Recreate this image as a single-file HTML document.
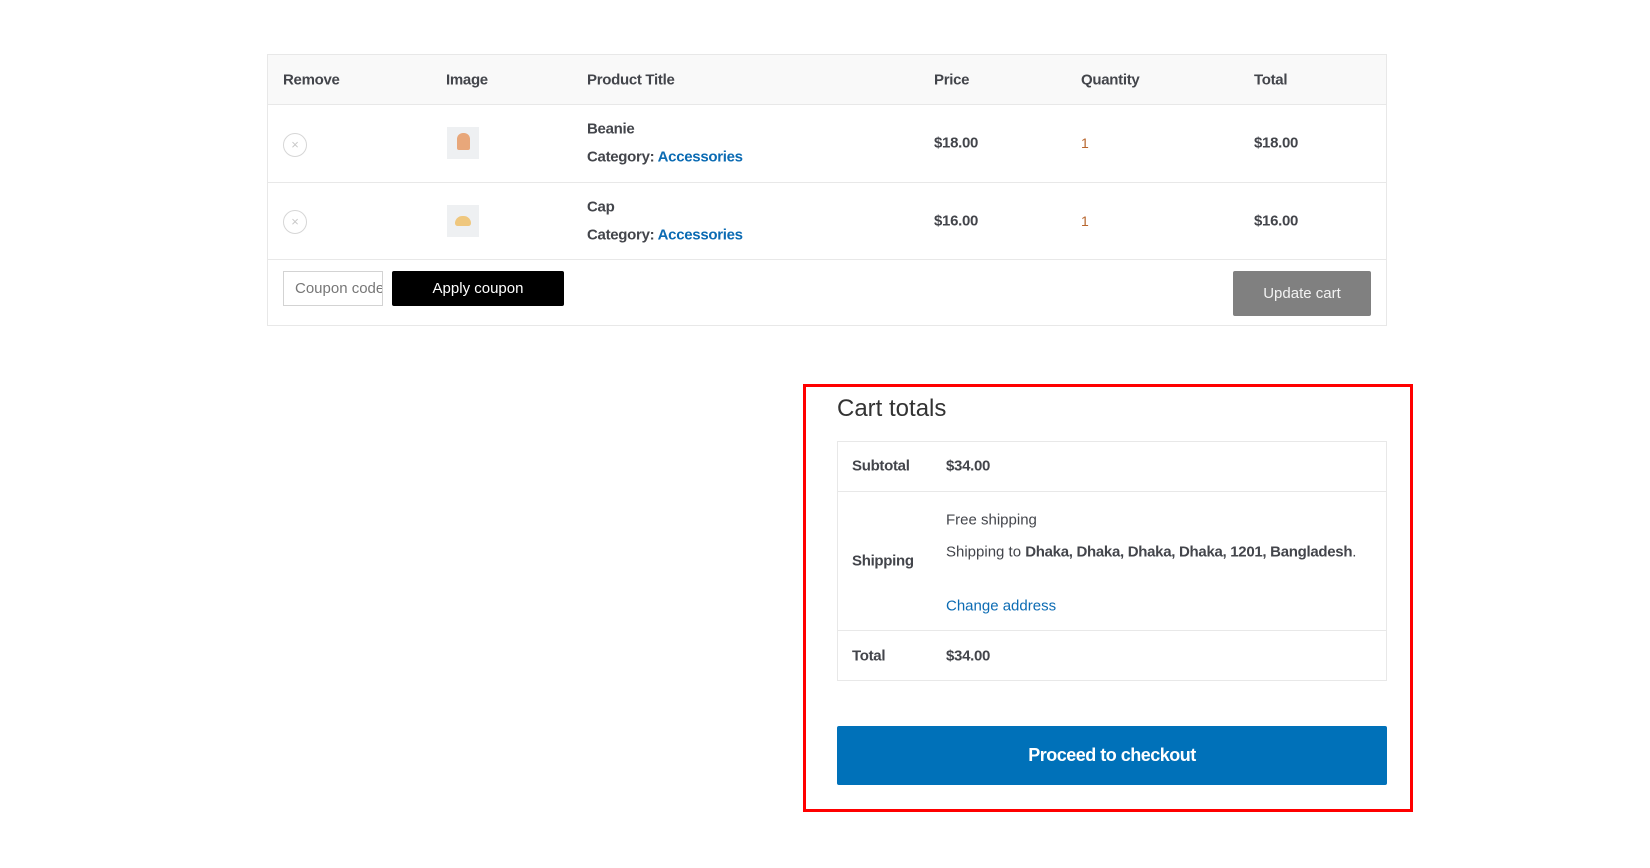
<!DOCTYPE html>
<html><head><meta charset="utf-8"><style>
*{box-sizing:border-box;margin:0;padding:0}
body{width:1650px;height:868px;background:#fff;font-family:"Liberation Sans",sans-serif;color:#43454b;position:relative;overflow:hidden;font-size:15px}
.abs{position:absolute}
.b{font-weight:bold;letter-spacing:-0.3px}
.link{color:#0b6bb3}
.line{position:absolute;background:#e8e8e8;height:1px}
.circ{position:absolute;width:24px;height:24px;border:1px solid #d6d6d6;border-radius:50%;color:#c8c8c8;font-size:13px;text-align:center;line-height:22px}
.thumb{position:absolute;width:32px;height:32px;background:#eef0f2}
.v{transform:translateY(-50%)}
</style></head><body>
<div class="abs" style="left:267px;top:54px;width:1120px;height:272px;border:1px solid #e8e8e8"></div>
<div class="abs" style="left:268px;top:55px;width:1118px;height:49px;background:#f9f9f9"></div>
<div class="line" style="left:267px;top:104px;width:1120px"></div>
<div class="line" style="left:267px;top:182px;width:1120px"></div>
<div class="line" style="left:267px;top:259px;width:1120px"></div>
<div class="abs b v" style="left:283px;top:80px">Remove</div>
<div class="abs b v" style="left:446px;top:80px">Image</div>
<div class="abs b v" style="left:587px;top:80px">Product Title</div>
<div class="abs b v" style="left:934px;top:80px">Price</div>
<div class="abs b v" style="left:1081px;top:80px">Quantity</div>
<div class="abs b v" style="left:1254px;top:80px">Total</div>

<div class="circ" style="left:283px;top:133px">×</div>
<div class="thumb" style="left:447px;top:127px"><div style="position:absolute;left:10px;top:6px;width:13px;height:17px;background:#e8a77a;border-radius:6px 6px 2px 2px"></div></div>
<div class="abs b v" style="left:587px;top:129px">Beanie</div>
<div class="abs b v" style="left:587px;top:157px">Category: <span class="link">Accessories</span></div>
<div class="abs b v" style="left:934px;top:143px">$18.00</div>
<div class="abs v" style="left:1081px;top:143px;color:#b8662e;font-size:14px">1</div>
<div class="abs b v" style="left:1254px;top:143px">$18.00</div>

<div class="circ" style="left:283px;top:210px">×</div>
<div class="thumb" style="left:447px;top:205px"><div style="position:absolute;left:8px;top:11px;width:16px;height:10px;background:#efc77e;border-radius:8px 8px 3px 3px"></div></div>
<div class="abs b v" style="left:587px;top:207px">Cap</div>
<div class="abs b v" style="left:587px;top:235px">Category: <span class="link">Accessories</span></div>
<div class="abs b v" style="left:934px;top:221px">$16.00</div>
<div class="abs v" style="left:1081px;top:221px;color:#b8662e;font-size:14px">1</div>
<div class="abs b v" style="left:1254px;top:221px">$16.00</div>

<div class="abs" style="left:283px;top:271px;width:100px;height:35px;border:1px solid #d3d3d3;color:#777;line-height:33px;padding-left:11px;padding-right:11px;overflow:hidden;white-space:nowrap">Coupon code</div>
<div class="abs" style="left:392px;top:271px;width:172px;height:35px;background:#000;color:#fff;text-align:center;line-height:35px;border-radius:2px">Apply coupon</div>
<div class="abs" style="left:1233px;top:271px;width:138px;height:45px;background:#808080;color:#f2f2f2;text-align:center;line-height:45px;border-radius:2px">Update cart</div>

<div class="abs" style="left:803px;top:384px;width:610px;height:428px;border:3px solid #f00"></div>
<div class="abs v" style="left:837px;top:409px;font-size:24px;color:#333">Cart totals</div>
<div class="abs" style="left:837px;top:441px;width:550px;height:240px;border:1px solid #e8e8e8"></div>
<div class="line" style="left:837px;top:491px;width:550px"></div>
<div class="line" style="left:837px;top:630px;width:550px"></div>
<div class="abs b v" style="left:852px;top:466px">Subtotal</div>
<div class="abs b v" style="left:946px;top:466px">$34.00</div>
<div class="abs b v" style="left:852px;top:561px">Shipping</div>
<div class="abs v" style="left:946px;top:520px">Free shipping</div>
<div class="abs v" style="left:946px;top:552px;white-space:nowrap">Shipping to <b style="letter-spacing:-0.3px">Dhaka, Dhaka, Dhaka, Dhaka, 1201, Bangladesh</b>.</div>
<div class="abs v link" style="left:946px;top:606px">Change address</div>
<div class="abs b v" style="left:852px;top:656px">Total</div>
<div class="abs b v" style="left:946px;top:656px">$34.00</div>
<div class="abs b" style="left:837px;top:726px;width:550px;height:59px;background:#0071b9;color:#fff;text-align:center;line-height:59px;font-size:18px;letter-spacing:-0.5px;border-radius:2px">Proceed to checkout</div>
</body></html>
